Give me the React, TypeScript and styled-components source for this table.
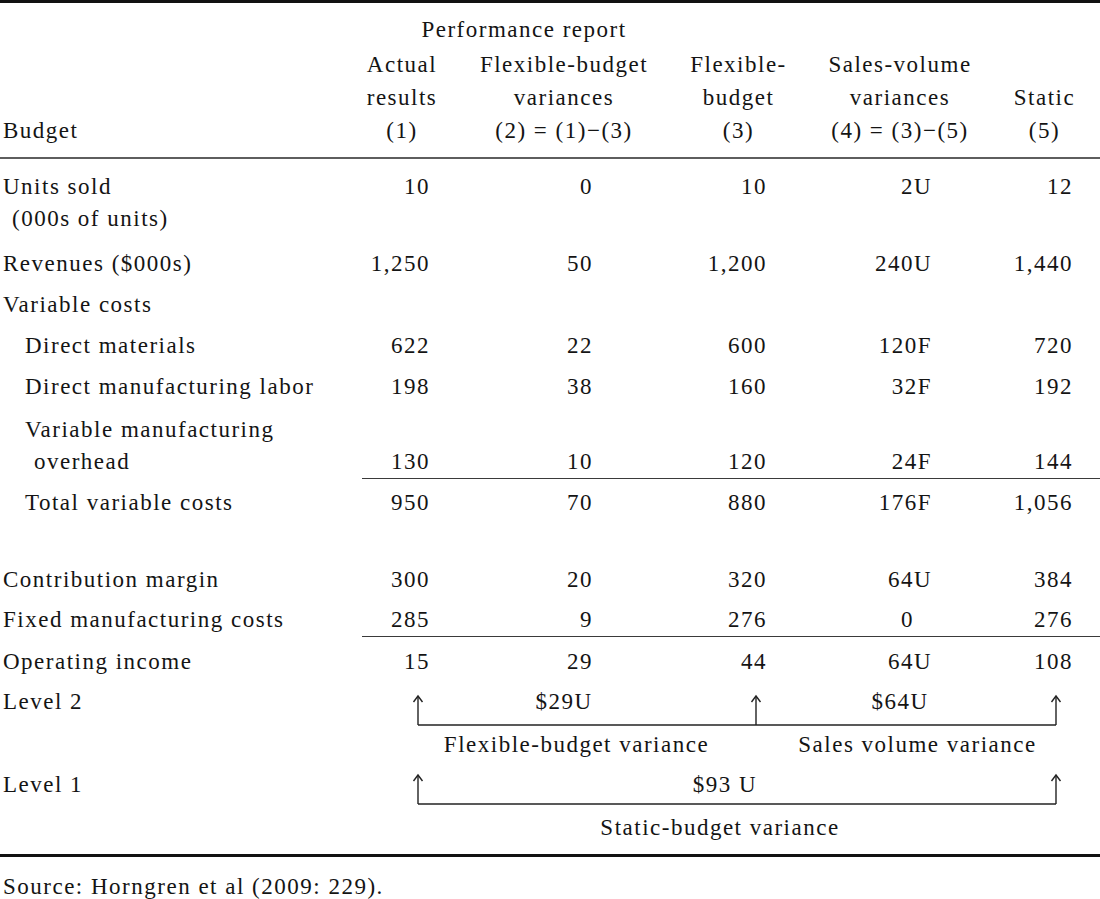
import React from "react";
import styled, { createGlobalStyle } from "styled-components";

const COLS = "362px 80px 244px 105px 218px 91px";
const INNER = "80px 244px 105px 218px 91px";
const NUM_PAD = [12, 93, 24, 77, 27];

const Global = createGlobalStyle`
  html, body { margin: 0; padding: 0; background: #ffffff; }
  body {
    font-family: "Liberation Serif", "Times New Roman", Tinos, "DejaVu Serif", serif;
    color: #141414;
    font-size: 23px;
    letter-spacing: 1.5px;
  }
`;

const Table = styled.div`
  width: 1100px;
  font-family: "Liberation Serif", "Times New Roman", Tinos, "DejaVu Serif", serif;
  border-top: 3px solid #121212;
`;

const Header = styled.div`
  display: grid;
  grid-template-columns: ${COLS};
  row-gap: 2px;
  padding: 10px 0 10px;
  line-height: 33px;
  border-bottom: 2px solid #5e5e5e;
`;

const GroupHead = styled.div`
  grid-row: 1;
  grid-column: 2 / 4;
  text-align: center;
`;

const ColHead = styled.div<{ $col: number; $pr?: number }>`
  grid-row: 2;
  grid-column: ${(p) => p.$col};
  align-self: end;
  text-align: center;
  padding-right: ${(p) => p.$pr ?? 0}px;
`;

const StubHead = styled.div`
  grid-row: 2;
  grid-column: 1;
  align-self: end;
  padding-left: 3px;
`;

const Row = styled.div<{ $pt: number; $pb: number; $rule?: boolean }>`
  display: grid;
  grid-template-columns: ${COLS};
  line-height: 32px;
  padding-top: ${(p) => p.$pt}px;
  padding-bottom: ${(p) => p.$pb}px;
  ${(p) =>
    p.$rule
      ? `&::after { content: ""; grid-column: 2 / -1; border-top: 1px solid #3a3a3a; }`
      : ""}
`;

const Spacer = styled.div<{ $h: number }>`
  height: ${(p) => p.$h}px;
`;

const Label = styled.div<{ $indent?: number; $hang?: number; $pt?: number }>`
  grid-column: 1;
  padding-top: ${(p) => p.$pt ?? 0}px;
  padding-left: ${(p) => 3 + (p.$indent ?? 0) + (p.$hang ?? 0)}px;
  text-indent: -${(p) => p.$hang ?? 0}px;
`;

const Num = styled.div<{ $pr: number; $valign: "start" | "end" }>`
  text-align: right;
  align-self: ${(p) => p.$valign};
  padding-right: ${(p) => p.$pr}px;
`;

const Bracket = styled.div<{ $h: number }>`
  grid-column: 2 / -1;
  position: relative;
  height: ${(p) => p.$h}px;
  display: grid;
  grid-template-columns: ${INNER};
  align-items: start;
`;

const Drawing = styled.svg`
  position: absolute;
  left: 0;
  top: 0;
  overflow: visible;
  pointer-events: none;
`;

const BracketText = styled.div<{ $col: number; $span?: number; $pr?: number; $pt: number }>`
  position: relative;
  grid-column: ${(p) => `${p.$col} / span ${p.$span ?? 1}`};
  text-align: center;
  padding-top: ${(p) => p.$pt}px;
  padding-right: ${(p) => p.$pr ?? 0}px;
`;

const Caption = styled.div<{ $from: number; $to: number; $pr?: number }>`
  grid-column: ${(p) => `${p.$from} / ${p.$to}`};
  text-align: center;
  padding-right: ${(p) => p.$pr ?? 0}px;
`;

const Footer = styled.div`
  border-top: 3px solid #121212;
  padding: 14px 3px;
  line-height: 32px;
`;

type Line = {
  label: React.ReactNode;
  values?: string[];
  indent?: number;
  hang?: number;
  pt: number;
  pb: number;
  rule?: boolean;
  valign?: "start" | "end";
  extra?: number[];
};

const lines: Line[] = [
  {
    label: (
      <>
        Units sold
        <br />
        (000s of units)
      </>
    ),
    values: ["10", "0", "10", "2U", "12"],
    hang: 9,
    pt: 12,
    pb: 9,
  },
  { label: "Revenues ($000s)", values: ["1,250", "50", "1,200", "240U", "1,440"], pt: 4, pb: 5 },
  { label: "Variable costs", pt: 4, pb: 5 },
  { label: "Direct materials", indent: 22, values: ["622", "22", "600", "120F", "720"], pt: 4, pb: 5 },
  {
    label: "Direct manufacturing labor",
    indent: 22,
    values: ["198", "38", "160", "32F", "192"],
    pt: 4,
    pb: 5,
  },
  {
    label: (
      <>
        Variable manufacturing
        <br />
        overhead
      </>
    ),
    indent: 22,
    hang: 9,
    values: ["130", "10", "120", "24F", "144"],
    valign: "end",
    pt: 6,
    pb: 0,
    rule: true,
  },
  {
    label: "Total variable costs",
    indent: 22,
    values: ["950", "70", "880", "176F", "1,056"],
    pt: 8,
    pb: 5,
  },
];

const lower: Line[] = [
  { label: "Contribution margin", values: ["300", "20", "320", "64U", "384"], pt: 4, pb: 5 },
  {
    label: "Fixed manufacturing costs",
    values: ["285", "9", "276", "0", "276"],
    extra: [0, 0, 0, 18, 0],
    pt: 3,
    pb: 2,
    rule: true,
  },
  { label: "Operating income", values: ["15", "29", "44", "64U", "108"], pt: 7, pb: 5 },
];

function DataRow({ line }: { line: Line }) {
  return (
    <Row $pt={line.pt} $pb={line.pb} $rule={line.rule}>
      <Label $indent={line.indent} $hang={line.hang}>
        {line.label}
      </Label>
      {line.values?.map((v, i) => (
        <Num key={i} $pr={NUM_PAD[i] + (line.extra?.[i] ?? 0)} $valign={line.valign ?? "start"}>
          {v}
        </Num>
      ))}
    </Row>
  );
}

function Arrow({ x, tip, base }: { x: number; tip: number; base: number }) {
  return (
    <>
      <path d={`M${x} ${tip} V${base}`} />
      <path d={`M${x - 4.5} ${tip + 6} L${x} ${tip} L${x + 4.5} ${tip + 6}`} />
    </>
  );
}

function BracketLines({ tip, base, h, middle }: { tip: number; base: number; h: number; middle: boolean }) {
  return (
    <Drawing width={738} height={h} viewBox={`0 0 738 ${h}`}>
      <g fill="none" stroke="#222" strokeWidth={1.4}>
        <path d={`M56 ${base} H694`} />
        <Arrow x={56} tip={tip} base={base} />
        {middle && <Arrow x={394} tip={tip} base={base} />}
        <Arrow x={694} tip={tip} base={base} />
      </g>
    </Drawing>
  );
}

export default function App() {
  return (
    <>
      <Global />
      <Table>
        <Header>
          <GroupHead>Performance report</GroupHead>
          <StubHead>Budget</StubHead>
          <ColHead $col={2}>
            Actual
            <br />
            results
            <br />
            (1)
          </ColHead>
          <ColHead $col={3}>
            Flexible-budget
            <br />
            variances
            <br />
            (2) = (1)−(3)
          </ColHead>
          <ColHead $col={4}>
            Flexible-
            <br />
            budget
            <br />
            (3)
          </ColHead>
          <ColHead $col={5}>
            Sales-volume
            <br />
            variances
            <br />
            (4) = (3)−(5)
          </ColHead>
          <ColHead $col={6} $pr={20}>
            Static
            <br />
            (5)
          </ColHead>
        </Header>

        {lines.map((l, i) => (
          <DataRow key={i} line={l} />
        ))}
        <Spacer $h={36} />
        {lower.map((l, i) => (
          <DataRow key={i} line={l} />
        ))}

        <Row $pt={0} $pb={0}>
          <Label $pt={3}>Level 2</Label>
          <Bracket $h={44}>
            <BracketLines tip={13} base={42} h={44} middle />
            <BracketText $col={2} $pt={3}>$29U</BracketText>
            <BracketText $col={4} $pt={3}>$64U</BracketText>
          </Bracket>
        </Row>
        <Row $pt={2} $pb={4}>
          <Caption $from={2} $to={5}>Flexible-budget variance</Caption>
          <Caption $from={5} $to={7} $pr={56}>Sales volume variance</Caption>
        </Row>
        <Row $pt={0} $pb={0}>
          <Label $pt={4}>Level 1</Label>
          <Bracket $h={41}>
            <BracketLines tip={10} base={39} h={41} middle={false} />
            <BracketText $col={1} $span={5} $pr={12} $pt={4}>$93 U</BracketText>
          </Bracket>
        </Row>
        <Row $pt={6} $pb={10}>
          <Caption $from={2} $to={7} $pr={22}>Static-budget variance</Caption>
        </Row>
        <Footer>Source: Horngren et al (2009: 229).</Footer>
      </Table>
    </>
  );
}
